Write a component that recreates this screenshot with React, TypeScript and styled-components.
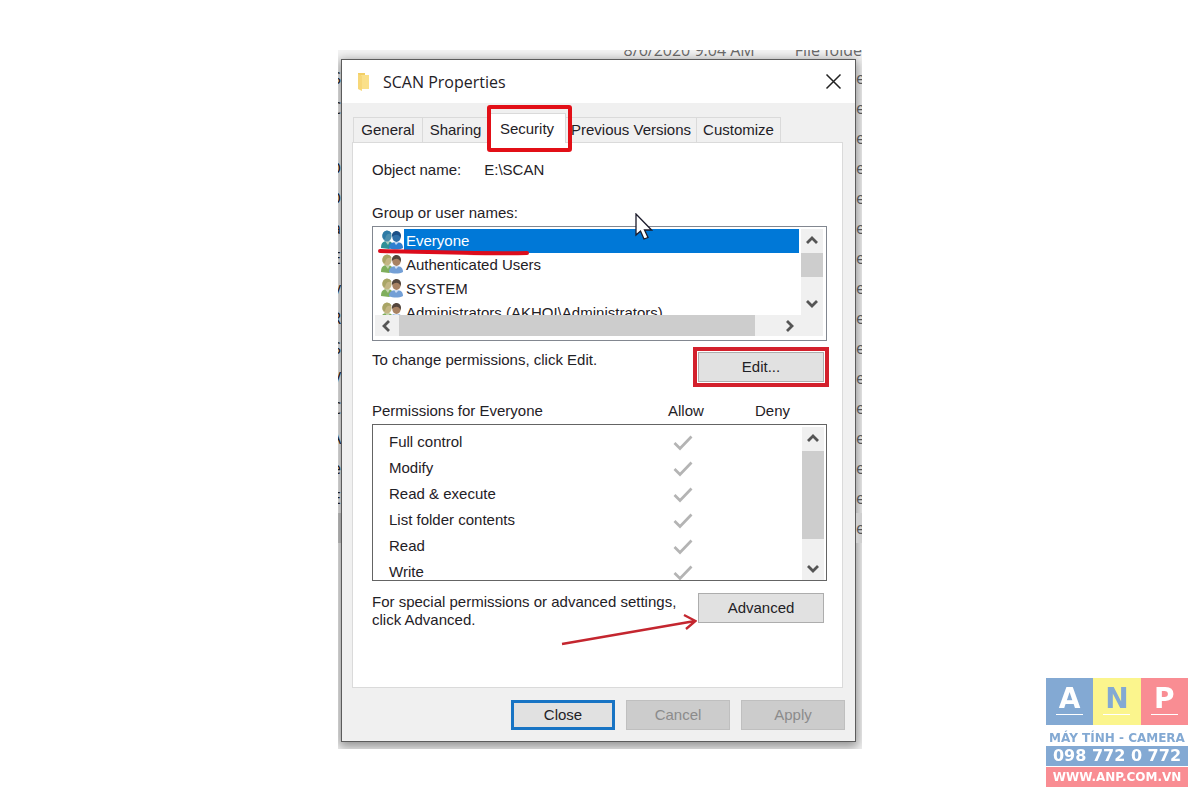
import React from "react";
import styled, { createGlobalStyle, css } from "styled-components";

const GlobalStyle = createGlobalStyle`
  *, *::before, *::after { box-sizing: border-box; }
  body { margin: 0; background: #fff; }
  button { font: inherit; color: inherit; margin: 0; padding: 0; }
`;

const uiFont = `"Liberation Sans", Arial, sans-serif`;
const ink = "#1f2126";

const Page = styled.main`
  min-height: 100vh;
  display: flex;
  flex-direction: column;
  align-items: center;
  padding: 50px 16px;
  font: 15px/20px ${uiFont};
  color: ${ink};
`;

const Capture = styled.div`
  width: 100%;
  max-width: 524px;
  display: grid;
  grid-template-columns: 3px minmax(0, 1fr) 6px;
  grid-template-rows: 9px auto 7px;
  overflow: hidden;
  background: #f4f4f4;
`;

const FileStrip = styled.div`
  grid-column: 1 / -1;
  display: flex;
  justify-content: flex-end;
  align-items: flex-end;
  gap: 40px;
  overflow: hidden;
  font: 16px/18px "Open Sans", sans-serif;
  color: #6b6b6b;
  white-space: nowrap;
`;

const Gutter = styled.div<{ $dark?: boolean }>`
  display: flex;
  flex-direction: column;
  overflow: hidden;
  padding-top: 4px;
  height: 683px;
  font: 16px/30px "Open Sans", sans-serif;
  color: ${(p) => (p.$dark ? "#222" : "#555")};
`;

const GutterRow = styled.span<{ $selected?: boolean; $end?: boolean }>`
  flex: 0 0 30px;
  display: flex;
  justify-content: ${(p) => (p.$end ? "flex-end" : "flex-start")};
  background: ${(p) => (p.$selected ? "#cfcfcf" : "transparent")};
`;

const Dialog = styled.section`
  min-width: 0;
  border: 1px solid #5c5c5c;
  background: #f0f0f0;
  box-shadow: 0 3px 10px 2px rgba(0, 0, 0, 0.4);
`;

const TitleBar = styled.header`
  display: flex;
  align-items: center;
  height: 43px;
  padding: 0 13px 0 15px;
  background: #fff;
`;

const Title = styled.h1`
  flex: 1;
  margin: 0 0 0 12px;
  font: 400 16px/20px "Open Sans", sans-serif;
`;

const IconButton = styled.button`
  display: grid;
  place-items: center;
  border: 0;
  background: none;
`;

const Body = styled.div`
  padding: 10px 12px 0 10px;
`;

const TabList = styled.div`
  display: flex;
  align-items: flex-end;
  padding-left: 1px;
`;

const Tab = styled.button<{ $width: number; $active?: boolean }>`
  flex: 0 1 ${(p) => p.$width}px;
  min-width: 0;
  height: 25px;
  border: 1px solid #dadada;
  border-width: 1px 1px 0 0;
  background: #f0f0f0;
  white-space: nowrap;
  display: flex;
  align-items: center;
  justify-content: center;
  &:first-child {
    border-left-width: 1px;
  }
  ${(p) =>
    p.$active &&
    css`
      position: relative;
      height: 30px;
      margin-bottom: -1px;
      background: #fff;
      &::after {
        content: "";
        position: absolute;
        inset: -9px -7px -9px -2px;
        border: 4px solid #e20f17;
        border-radius: 3px;
      }
    `}
`;

const Panel = styled.div`
  border: 1px solid #dadada;
  background: #fff;
  padding: 17px 15px 58px 19px;
`;

const ObjectRow = styled.dl`
  display: flex;
  gap: 23px;
  margin: 0 0 23px;
  dt,
  dd {
    margin: 0;
  }
`;

const Label = styled.div`
  margin-bottom: 3px;
`;

const ListBox = styled.div`
  position: relative;
  display: grid;
  grid-template-columns: minmax(0, 1fr) 22px;
  grid-template-rows: 86px 21px;
  padding: 2px 3px 4px 2px;
  border: 1px solid #828790;
  background: #fff;
`;

const UserList = styled.ul`
  list-style: none;
  margin: 0;
  padding: 0 2px 0 5px;
  overflow: hidden;
`;

const UserItem = styled.li<{ $selected?: boolean }>`
  display: flex;
  height: 24px;
  line-height: 24px;
  white-space: nowrap;
  svg {
    flex: none;
  }
  span {
    flex: 1;
    padding-left: 2px;
    background: ${(p) => (p.$selected ? "#0078d7" : "transparent")};
    color: ${(p) => (p.$selected ? "#fff" : "inherit")};
  }
`;

const ScrollBar = styled.div<{ $across?: boolean }>`
  display: flex;
  flex-direction: ${(p) => (p.$across ? "row" : "column")};
  grid-column: ${(p) => (p.$across ? "1 / -1" : "auto")};
  padding-right: ${(p) => (p.$across ? "22px" : "0")};
  background: #f0f0f0;
`;

const ScrollButton = styled(IconButton)`
  flex: 0 0 24px;
`;

const Thumb = styled.div<{ $size: number }>`
  flex: 0 1 ${(p) => p.$size}px;
  background: #cdcdcd;
`;

const Spring = styled.div`
  flex: 1;
`;

const Underline = styled.svg`
  position: absolute;
  left: 5px;
  top: 21px;
`;

const Cursor = styled.svg`
  position: absolute;
  left: 262px;
  top: -14px;
`;

const ActionRow = styled.div<{ $gap: number }>`
  position: relative;
  display: flex;
  justify-content: space-between;
  align-items: flex-start;
  margin-top: ${(p) => p.$gap}px;
  padding-right: 3px;
  p {
    margin: 0;
  }
`;

const Note = styled.p`
  flex: 1;
  line-height: 18px;
`;

const PushButton = styled.button<{ $primary?: boolean; $wide?: boolean; $marked?: boolean }>`
  width: ${(p) => (p.$wide ? 126 : 104)}px;
  height: 30px;
  border: ${(p) => (p.$primary ? "3px solid #1874c4" : "1px solid #adadad")};
  background: #e1e1e1;
  ${(p) =>
    p.$marked &&
    css`
      margin-top: 2px;
      outline: 4px solid #d3202c;
      outline-offset: 1px;
    `}
  &:disabled {
    background: #cccccc;
    border-color: #bfbfbf;
    color: #8b8b8b;
  }
`;

const PermissionHeader = styled.div`
  display: grid;
  grid-template-columns: minmax(0, 1fr) 87px 72px;
  margin: 19px 0 3px;
`;

const PermissionBox = styled.div`
  display: grid;
  grid-template-columns: minmax(0, 1fr) 22px;
  height: 157px;
  padding: 2px 2px 0;
  border: 1px solid #646464;
`;

const PermissionClip = styled.div`
  overflow: hidden;
  padding-top: 2px;
`;

const PermissionTable = styled.table`
  width: 100%;
  table-layout: fixed;
  border-collapse: collapse;
  th {
    height: 26px;
    padding: 0 0 0 14px;
    font-weight: 400;
    text-align: left;
  }
  td {
    padding: 0;
  }
`;

const Check = styled.label`
  display: grid;
  width: 20px;
  height: 16px;
  margin-top: 2px;
  > * {
    grid-area: 1 / 1;
  }
  input {
    appearance: none;
    margin: 0;
  }
`;

const Arrow = styled.svg`
  position: absolute;
  right: 130px;
  top: 20px;
`;

const Footer = styled.footer`
  display: flex;
  justify-content: flex-end;
  gap: 11px;
  padding: 12px 10px 11px;
`;

const Brand = styled.aside`
  position: fixed;
  right: 12px;
  bottom: 12px;
  width: 142px;
  font-family: "DejaVu Sans", sans-serif;
  font-weight: 700;
  text-align: center;
  white-space: nowrap;
`;

const BrandTiles = styled.div`
  display: grid;
  grid-template-columns: repeat(3, 1fr);
`;

const BrandTile = styled.div<{ $bg: string; $fg: string }>`
  display: flex;
  flex-direction: column;
  align-items: center;
  height: 47px;
  padding-top: 8px;
  background: ${(p) => p.$bg};
  color: ${(p) => p.$fg};
  font-size: 28px;
  line-height: 26px;
  &::after {
    content: "";
    width: 27px;
    height: 1px;
    margin-top: 2px;
    background: #fff;
  }
`;

const BrandName = styled.div`
  display: flex;
  justify-content: center;
  padding-top: 5px;
  font-size: 12px;
  line-height: 16px;
  color: #83a9d3;
`;

const BrandBar = styled.a<{ $bg: string; $size: number }>`
  display: flex;
  justify-content: center;
  margin-bottom: 1px;
  background: ${(p) => p.$bg};
  color: #fff;
  text-decoration: none;
  font-size: ${(p) => p.$size}px;
  line-height: 20px;
`;

const chevrons = {
  up: "M1 8 L6 3 L11 8",
  down: "M1 4 L6 9 L11 4",
  left: "M8 1 L3 6 L8 11",
  right: "M4 1 L9 6 L4 11",
};

function Chevron({ dir }: { dir: keyof typeof chevrons }) {
  return (
    <svg width="12" height="12" viewBox="0 0 12 12" aria-hidden="true">
      <path d={chevrons[dir]} fill="none" stroke="#555" strokeWidth="2.8" />
    </svg>
  );
}

function UsersIcon({ selected }: { selected?: boolean }) {
  const back = selected ? "#2f8f96" : "#7fae5c";
  const backHead = selected ? "#4c8fae" : "#c3b684";
  const backHair = selected ? "#2e7ba6" : "#a9a566";
  const face = selected ? "#2f6fa8" : "#a88263";
  const hair = selected ? "#1c4f86" : "#54463c";
  const shirt = selected ? "#2f7fd0" : "#739fd6";
  return (
    <svg width="24" height="24" viewBox="0 0 24 24" aria-hidden="true">
      <path d="M1 19 C1 14 3 12 7 12 C11 12 13 14 13 18 L9 20 Z" fill={back} />
      <path d="M5 12 L8 16 L10 12 Z" fill="#e3e6d2" opacity=".7" />
      <ellipse cx="7" cy="7" rx="4.600" ry="5.500" fill={backHead} />
      <path d="M2.400 7 C2.500 1 10 0 11.500 5 C8 4 6 5 5 10 C3 10 2.400 9 2.400 7 Z" fill={backHair} />
      <path d="M9 19 C9 15 12 13 16 13 C21 13 23 15 23 19 C19 21 13 21 9 19 Z" fill={shirt} />
      <path d="M14 13 L16 16 L19 13 Z" fill="#e6eefa" opacity=".8" />
      <ellipse cx="16.500" cy="8" rx="4.200" ry="5" fill={face} />
      <path d="M12 8 C11 1 20 0 21 6 C21 8 20.500 9 20.500 9 C19 5 15 5 12 8 Z" fill={hair} />
    </svg>
  );
}

function FolderIcon() {
  return (
    <svg width="14" height="20" viewBox="0 0 14 20" aria-hidden="true">
      <path d="M1 1 H8 V15 H1 Z" fill="#f2cf66" />
      <path d="M4 3 H12 V17 H4 Z" fill="#fae08a" />
      <path d="M1 2 L5 4 V19 L1 17 Z" fill="#f7d778" />
    </svg>
  );
}

const tabs = [
  { name: "General", width: 70 },
  { name: "Sharing", width: 66 },
  { name: "Security", width: 77, active: true },
  { name: "Previous Versions", width: 131 },
  { name: "Customize", width: 84 },
];
const users = ["Everyone", "Authenticated Users", "SYSTEM", "Administrators (AKHOI\\Administrators)"];
const permissions = ["Full control", "Modify", "Read & execute", "List folder contents", "Read", "Write"];
const fileRows = ["S", "C", "", "D", "D", "a", "E", "v", "R", "S", "V", "C", "A", "e", "E", ""];

export default function App() {
  return (
    <>
      <GlobalStyle />
      <Page>
        <Capture>
          <FileStrip>
            <span>8/6/2020 9:04 AM</span>
            <span>File folde</span>
          </FileStrip>
          <Gutter $dark>
            {fileRows.map((t, i) => (
              <GutterRow key={i} $end $selected={i === 15}>{t}</GutterRow>
            ))}
          </Gutter>
          <Dialog aria-labelledby="dialog-title">
            <TitleBar>
              <FolderIcon />
              <Title id="dialog-title">SCAN Properties</Title>
              <IconButton aria-label="Close window">
                <svg width="17" height="17" viewBox="0 0 17 17" aria-hidden="true">
                  <path d="M1.500 1.500 L15.500 15.500 M15.500 1.500 L1.500 15.500" stroke="#222" strokeWidth="1.500" />
                </svg>
              </IconButton>
            </TitleBar>
            <Body>
              <TabList role="tablist">
                {tabs.map((t) => (
                  <Tab key={t.name} role="tab" aria-selected={!!t.active} $width={t.width} $active={t.active}>
                    {t.name}
                  </Tab>
                ))}
              </TabList>
              <Panel role="tabpanel">
                <ObjectRow>
                  <dt>Object name:</dt>
                  <dd>E:\SCAN</dd>
                </ObjectRow>
                <Label id="users-label">Group or user names:</Label>
                <ListBox>
                  <UserList role="listbox" aria-labelledby="users-label">
                    {users.map((u, i) => (
                      <UserItem key={u} role="option" aria-selected={i === 0} $selected={i === 0}>
                        <UsersIcon selected={i === 0} />
                        <span>{u}</span>
                      </UserItem>
                    ))}
                  </UserList>
                  <ScrollBar>
                    <ScrollButton aria-label="Scroll up"><Chevron dir="up" /></ScrollButton>
                    <Thumb $size={24} />
                    <Spring />
                    <ScrollButton aria-label="Scroll down"><Chevron dir="down" /></ScrollButton>
                  </ScrollBar>
                  <ScrollBar $across>
                    <ScrollButton aria-label="Scroll left"><Chevron dir="left" /></ScrollButton>
                    <Thumb $size={356} />
                    <Spring />
                    <ScrollButton aria-label="Scroll right"><Chevron dir="right" /></ScrollButton>
                  </ScrollBar>
                  <Underline width="151" height="8" viewBox="0 0 151 8" aria-hidden="true">
                    <path d="M2 3 C50 4 100 6 149 5" fill="none" stroke="#dc0c1c" strokeWidth="4" strokeLinecap="round" />
                  </Underline>
                  <Cursor width="18" height="30" viewBox="0 0 18 30" aria-hidden="true">
                    <path d="M1 1 V22 L5.500 18 L9 26 L13 24.500 L9.500 17 H16.500 Z" fill="#fff" stroke="#1c1c2c" strokeWidth="1.300" />
                  </Cursor>
                </ListBox>
                <ActionRow $gap={9}>
                  <p>To change permissions, click Edit.</p>
                  <PushButton $wide $marked>Edit...</PushButton>
                </ActionRow>
                <PermissionHeader>
                  <span id="perm-label">Permissions for Everyone</span>
                  <span>Allow</span>
                  <span>Deny</span>
                </PermissionHeader>
                <PermissionBox>
                  <PermissionClip>
                    <PermissionTable aria-labelledby="perm-label">
                      <colgroup>
                        <col />
                        <col width="87" />
                        <col width="42" />
                      </colgroup>
                      <tbody>
                        {permissions.map((name) => (
                          <tr key={name}>
                            <th scope="row">{name}</th>
                            <td>
                              <Check>
                                <input type="checkbox" checked disabled readOnly aria-label={`Allow ${name}`} />
                                <svg width="20" height="16" viewBox="0 0 20 16" aria-hidden="true">
                                  <path d="M1.500 8 L7 13.500 L18.500 1.500" fill="none" stroke="#b4b4b4" strokeWidth="2.700" />
                                </svg>
                              </Check>
                            </td>
                            <td />
                          </tr>
                        ))}
                      </tbody>
                    </PermissionTable>
                  </PermissionClip>
                  <ScrollBar>
                    <ScrollButton aria-label="Scroll up"><Chevron dir="up" /></ScrollButton>
                    <Thumb $size={88} />
                    <Spring />
                    <ScrollButton aria-label="Scroll down"><Chevron dir="down" /></ScrollButton>
                  </ScrollBar>
                </PermissionBox>
                <ActionRow $gap={12}>
                  <Note>
                    For special permissions or advanced settings,
                    <br />
                    click Advanced.
                  </Note>
                  <PushButton $wide>Advanced</PushButton>
                  <Arrow width="136" height="34" viewBox="0 0 136 34" aria-hidden="true">
                    <path d="M1 31 L134 8 M123 2 L134.500 8 L125 16" fill="none" stroke="#c4262f" strokeWidth="2.400" />
                  </Arrow>
                </ActionRow>
              </Panel>
            </Body>
            <Footer>
              <PushButton $primary>Close</PushButton>
              <PushButton disabled>Cancel</PushButton>
              <PushButton disabled>Apply</PushButton>
            </Footer>
          </Dialog>
          <Gutter>
            {fileRows.map((_, i) => (
              <GutterRow key={i} $selected={i === 15}>e</GutterRow>
            ))}
          </Gutter>
        </Capture>
      </Page>
      <Brand>
        <BrandTiles>
          <BrandTile $bg="#83a9d3" $fg="#fff">A</BrandTile>
          <BrandTile $bg="#fbf58d" $fg="#83a9d3">N</BrandTile>
          <BrandTile $bg="#f98d93" $fg="#fff">P</BrandTile>
        </BrandTiles>
        <BrandName>MÁY TÍNH - CAMERA</BrandName>
        <BrandBar href="tel:0987720772" $bg="#83a9d3" $size={16}>098 772 0 772</BrandBar>
        <BrandBar href="#" $bg="#f98d93" $size={12}>WWW.ANP.COM.VN</BrandBar>
      </Brand>
    </>
  );
}
